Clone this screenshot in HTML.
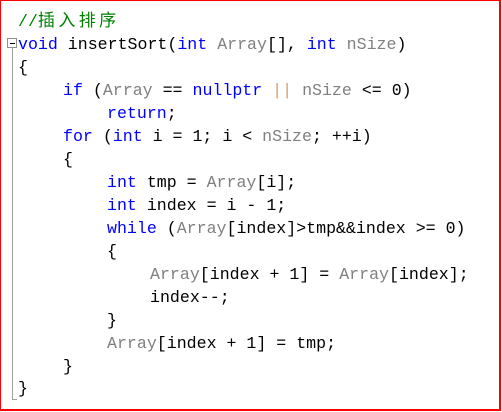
<!DOCTYPE html>
<html><head><meta charset="utf-8"><style>
html,body{margin:0;padding:0;}
body{width:502px;height:412px;position:relative;background:#fff;overflow:hidden;}
.frame{position:absolute;left:0;top:0;width:498px;height:408px;border:2px solid #f00;border-left-width:1px;border-top-width:1px;}
.l{position:absolute;font-family:"Liberation Mono","Noto Sans CJK SC",monospace;font-size:16.6px;line-height:23px;white-space:pre;color:#000;}
.k{color:#0000ff}.g{color:#808080}.c{color:#008000}.o{color:#d2a06e}
.cj{letter-spacing:3.4px;font-size:17px;}
.fold{position:absolute;left:12px;top:48px;width:1px;height:352px;background:#a0a0a0;}
.tick{position:absolute;left:12px;top:399px;width:5px;height:1px;background:#a0a0a0;}
.box{position:absolute;left:7px;top:38px;width:8px;height:8px;border:1px solid #909090;background:#fff;}
.box:after{content:"";position:absolute;left:2px;top:4px;width:5px;height:1px;background:#000;}
</style></head><body>
<div class="frame"></div>
<div class="fold"></div><div class="tick"></div><div class="box"></div>
<div class="l c" style="left:18px;top:10px;">//<span class="cj">插入排序</span></div>
<div class="l" style="left:18px;top:33px;"><span class="k">void</span> insertSort(<span class="k">int</span> <span class="g">Array</span>[], <span class="k">int</span> <span class="g">nSize</span>)</div>
<div class="l" style="left:18px;top:56px;">{</div>
<div class="l" style="left:63px;top:79px;"><span class="k">if</span> (<span class="g">Array</span> == <span class="k">nullptr</span> <span class="o">||</span> <span class="g">nSize</span> &lt;= 0)</div>
<div class="l" style="left:107px;top:102px;"><span class="k">return</span>;</div>
<div class="l" style="left:63px;top:125px;"><span class="k">for</span> (<span class="k">int</span> i = 1; i &lt; <span class="g">nSize</span>; ++i)</div>
<div class="l" style="left:63px;top:148px;">{</div>
<div class="l" style="left:107px;top:171px;"><span class="k">int</span> tmp = <span class="g">Array</span>[i];</div>
<div class="l" style="left:107px;top:194px;"><span class="k">int</span> index = i - 1;</div>
<div class="l" style="left:107px;top:217px;"><span class="k">while</span> (<span class="g">Array</span>[index]&gt;tmp&amp;&amp;index &gt;= 0)</div>
<div class="l" style="left:107px;top:240px;">{</div>
<div class="l" style="left:150px;top:263px;"><span class="g">Array</span>[index + 1] = <span class="g">Array</span>[index];</div>
<div class="l" style="left:150px;top:286px;">index--;</div>
<div class="l" style="left:107px;top:309px;">}</div>
<div class="l" style="left:107px;top:332px;"><span class="g">Array</span>[index + 1] = tmp;</div>
<div class="l" style="left:63px;top:355px;">}</div>
<div class="l" style="left:18px;top:377px;">}</div>
</body></html>
